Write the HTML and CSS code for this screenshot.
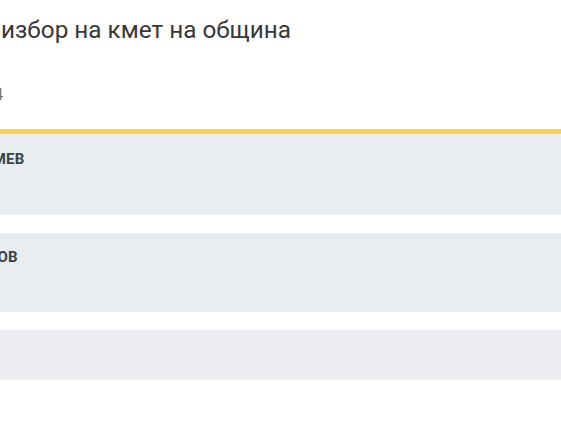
FILE: index.html
```html
<!DOCTYPE html>
<html lang="bg">
<head>
<meta charset="utf-8">
<title>Избор на кмет на община</title>
<link rel="stylesheet" href="styles.css">
</head>
<body>
<div class="page">
  <header class="head">
    <h1 class="title">избор на кмет на община</h1>
    <div class="date"><span class="date-text">2024</span></div>
  </header>
  <ul class="list">
    <li class="card card-tall"><span class="name name-1">ИВАН ДИМИТРОВ ГЕРАСИМЕВ</span></li>
    <li class="card card-tall"><span class="name name-2">ГЕОРГИ ПЕТРОВ ИВАНОВ</span></li>
    <li class="card card-short"><span class="name name-3"></span></li>
  </ul>
</div>
</body>
</html>
```

FILE: styles.css
```css
html, body {
  margin: 0;
  padding: 0;
  background: #ffffff;
  overflow: hidden;
}
body {
  font-family: Roboto, "Liberation Sans", Arial, sans-serif;
  width: 561px;
  height: 421px;
}
.page {
  width: 561px;
}
.head {
  padding: 15px 0 25px 0;
  border-bottom: 5px solid #f5d163;
  box-shadow: 0 1px 2px rgba(245, 209, 99, 0.35);
}
.title {
  margin: 0;
  font-size: 24.3px;
  line-height: 30px;
  font-weight: 400;
  color: #383838;
  white-space: nowrap;
  padding-left: 1px;
}
.date {
  margin-top: 39px;
  height: 20px;
  overflow: hidden;
  white-space: nowrap;
}
.date-text {
  display: inline-block;
  margin-left: -35px;
  font-size: 17px;
  line-height: 20px;
  color: #7a7a7a;
}
.list {
  list-style: none;
  margin: 0;
  padding: 1px 0 0 0;
  display: flex;
  flex-direction: column;
  gap: 18px;
}
.card {
  background: #eaedf0;
  box-sizing: border-box;
  padding-top: 14px;
  overflow: hidden;
  white-space: nowrap;
  border-bottom: 1px solid #eef1f3;
}
.card-tall {
  height: 80px;
}
.card-tall + .card-tall {
  height: 79px;
}
.card-short {
  height: 50px;
  background: #eceef1;
}
.name {
  display: inline-block;
  font-size: 15px;
  line-height: 18px;
  font-weight: 700;
  color: #36444c;
  letter-spacing: 0.2px;
}
.name-1 {
  margin-left: -199px;
}
.name-2 {
  margin-left: -168px;
}
```
